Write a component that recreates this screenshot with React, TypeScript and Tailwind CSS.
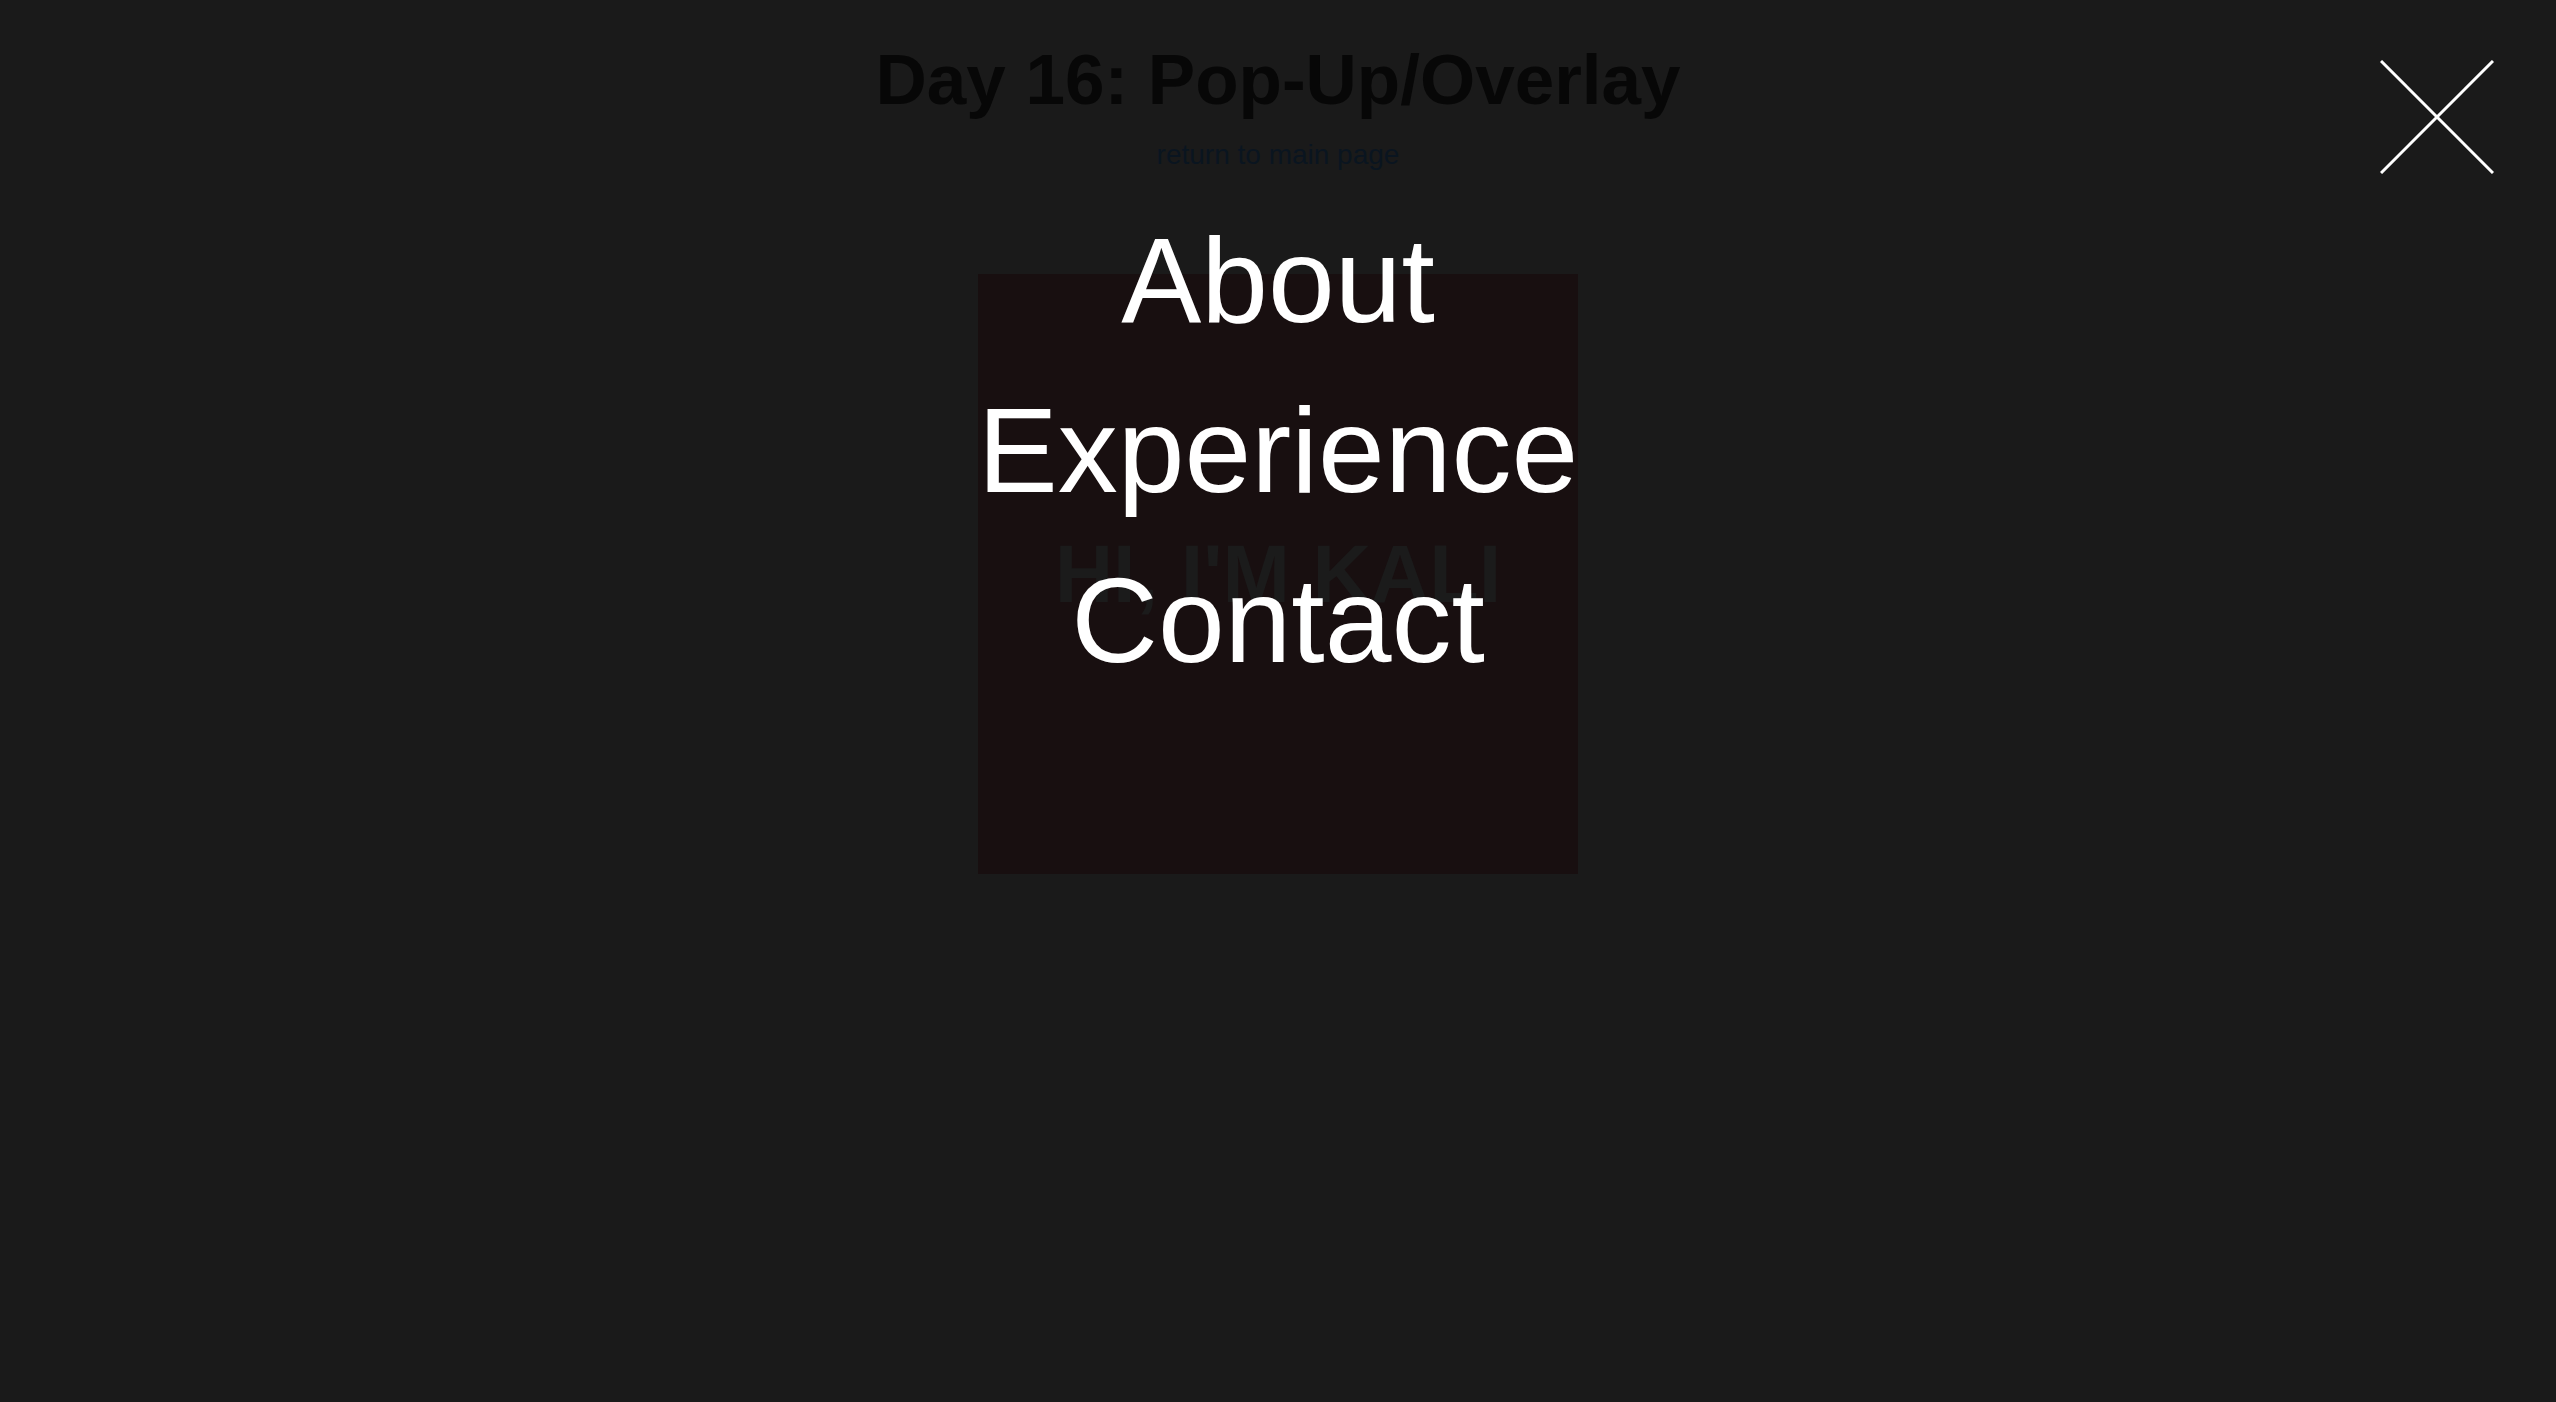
import React from "react";

export default function App() {
  return (
    <div className="relative min-h-screen w-full overflow-hidden bg-[#1a1a1a] font-['Liberation_Sans',Arial,sans-serif]">
      <div className="flex flex-col items-center">
        <h1 className="mt-[44px] text-[71px] font-bold leading-none text-[#070707]">
          Day 16: Pop-Up/Overlay
        </h1>
        <a href="#" className="mt-[26px] text-[28px] leading-none text-[#0a1520]">
          return to main page
        </a>
        <div className="mt-[105px] flex h-[600px] w-[600px] items-center justify-center bg-[#180f10]">
          <span className="text-[81px] font-bold leading-none text-[#1b1b1b]">HI, I'M KALI</span>
        </div>
      </div>

      <nav className="absolute inset-x-0 top-[195px] flex flex-col items-center">
        {["About", "Experience", "Contact"].map((item) => (
          <a key={item} href="#" className="text-[120px] leading-[170px] text-white">
            {item}
          </a>
        ))}
      </nav>

      <button className="absolute right-[62px] top-[60px] h-[114px] w-[114px]" aria-label="close">
        <svg width="114" height="114" viewBox="0 0 114 114">
          <line x1="1" y1="1" x2="113" y2="113" stroke="white" strokeWidth="3" />
          <line x1="113" y1="1" x2="1" y2="113" stroke="white" strokeWidth="3" />
        </svg>
      </button>
    </div>
  );
}
